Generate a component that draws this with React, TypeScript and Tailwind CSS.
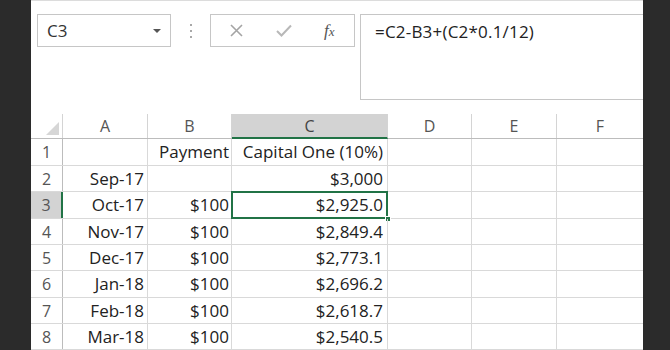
import React from 'react';

const rows = [
    { n: 1, a: '', b: 'Payment', c: 'Capital One (10%)', h: 'h-[27px]' },
    { n: 2, a: 'Sep-17', b: '', c: '$3,000', h: 'h-[26px]' },
    { n: 3, a: 'Oct-17', b: '$100', c: '$2,925.0', h: 'h-[27px]' },
    { n: 4, a: 'Nov-17', b: '$100', c: '$2,849.4', h: 'h-[26px]' },
    { n: 5, a: 'Dec-17', b: '$100', c: '$2,773.1', h: 'h-[26px]' },
    { n: 6, a: 'Jan-18', b: '$100', c: '$2,696.2', h: 'h-[27px]' },
    { n: 7, a: 'Feb-18', b: '$100', c: '$2,618.7', h: 'h-[26px]' },
    { n: 8, a: 'Mar-18', b: '$100', c: '$2,540.5', h: 'h-[26px]' },
];

const FormulaBar: React.FC = () => (
    <div className="flex items-start pl-[6px] pt-[13px]">
        <div className="flex h-[33px] w-[134px] items-center justify-between border border-[#c6c6c6] bg-white pl-[9px] pr-[9px]">
            <span className="text-[17px] text-[#333]">C3</span>
            <span className="h-0 w-0 border-x-[4px] border-t-[4px] border-x-transparent border-t-[#555]" />
        </div>
        <div className="flex h-[33px] w-[39px] flex-col items-center justify-center gap-[4px]">
            <span className="h-[2px] w-[2px] bg-[#a8a8a8]" />
            <span className="h-[2px] w-[2px] bg-[#a8a8a8]" />
            <span className="h-[2px] w-[2px] bg-[#a8a8a8]" />
        </div>
        <div className="flex h-[33px] w-[145px] items-center border border-[#c6c6c6] bg-white">
            <svg className="ml-[19px]" width="13" height="13" viewBox="0 0 13 13">
                <path d="M1 1L12 12M12 1L1 12" stroke="#a4a4a4" strokeWidth="1.6" fill="none" />
            </svg>
            <svg className="ml-[33px]" width="16" height="13" viewBox="0 0 16 13">
                <path d="M1 7L5.5 11.5L15 1.5" stroke="#b8b8b8" strokeWidth="2" fill="none" />
            </svg>
            <span className="ml-[32px] font-['Liberation_Serif',serif] text-[17px] italic text-[#555]">
                f<span className="text-[13px]">x</span>
            </span>
        </div>
        <div className="ml-[5px] h-[86px] flex-1 border-y border-l border-[#c6c6c6] bg-white pl-[14px] pt-[4px]">
            <span className="text-[17px] tracking-[0.2px] text-[#222]">=C2-B3+(C2*0.1/12)</span>
        </div>
    </div>
);

const Grid: React.FC = () => (
    <div className="mt-[14px] text-[17px]">
        <div className="flex h-[25px] border-b border-[#bcbcbc] text-[16px] text-[#555]">
            <div className="relative w-[32px] border-r border-[#d4d4d4]">
                <span className="absolute bottom-[3px] right-[3px] h-0 w-0 border-b-[13px] border-l-[13px] border-b-[#d6d6d6] border-l-transparent" />
            </div>
            <div className="flex w-[85px] items-center justify-center border-r border-[#d4d4d4]">A</div>
            <div className="flex w-[84px] items-center justify-center border-r border-[#d4d4d4]">B</div>
            <div className="-mb-px flex w-[156px] items-center justify-center border-b-2 border-r border-b-[#217346] border-r-[#d4d4d4] bg-[#d3d3d3] text-[#444]">C</div>
            <div className="flex w-[84px] items-center justify-center border-r border-[#d4d4d4]">D</div>
            <div className="flex w-[85px] items-center justify-center border-r border-[#d4d4d4]">E</div>
            <div className="flex w-[86px] items-center justify-center">F</div>
        </div>
        {rows.map((r) => (
            <div key={r.n} className={`flex ${r.h} border-b border-[#d9d9d9] text-[#222]`}>
                <div
                    className={`flex w-[32px] items-center justify-center text-[16px] text-[#555] ${r.n === 3 ? 'border-r-2 border-[#217346] bg-[#d3d3d3]' : 'border-r border-[#bcbcbc]'}`}
                >
                    {r.n}
                </div>
                <div className="flex w-[85px] items-center justify-end border-r border-[#d9d9d9] pr-[3px]">{r.a}</div>
                <div className="flex w-[84px] items-center justify-end border-r border-[#d9d9d9] pr-[2px]">{r.b}</div>
                <div className="relative flex w-[156px] items-center justify-end border-r border-[#d9d9d9] pr-[4px]">
                    {r.c}
                    {r.n === 3 && (
                        <>
                            <span className="absolute -bottom-[1px] -left-[1px] -right-[1px] -top-[1px] border-2 border-[#217346]" />
                            <span className="absolute -bottom-[4px] -right-[4px] h-[6px] w-[6px] border border-white bg-[#217346]" />
                        </>
                    )}
                </div>
                <div className="w-[84px] border-r border-[#d9d9d9]" />
                <div className="w-[85px] border-r border-[#d9d9d9]" />
                <div className="w-[86px]" />
            </div>
        ))}
    </div>
);

export default function App() {
    return (
        <div className="flex h-[350px] w-[670px] overflow-hidden bg-[#2b2b2b] font-['Open_Sans',sans-serif]">
            <div className="w-[31px] shrink-0" />
            <div className="flex w-[612px] shrink-0 flex-col bg-white">
                <div className="h-[2px] bg-[#dcdcdc]" />
                <FormulaBar />
                <Grid />
            </div>
            <div className="w-[27px] shrink-0" />
        </div>
    );
}
